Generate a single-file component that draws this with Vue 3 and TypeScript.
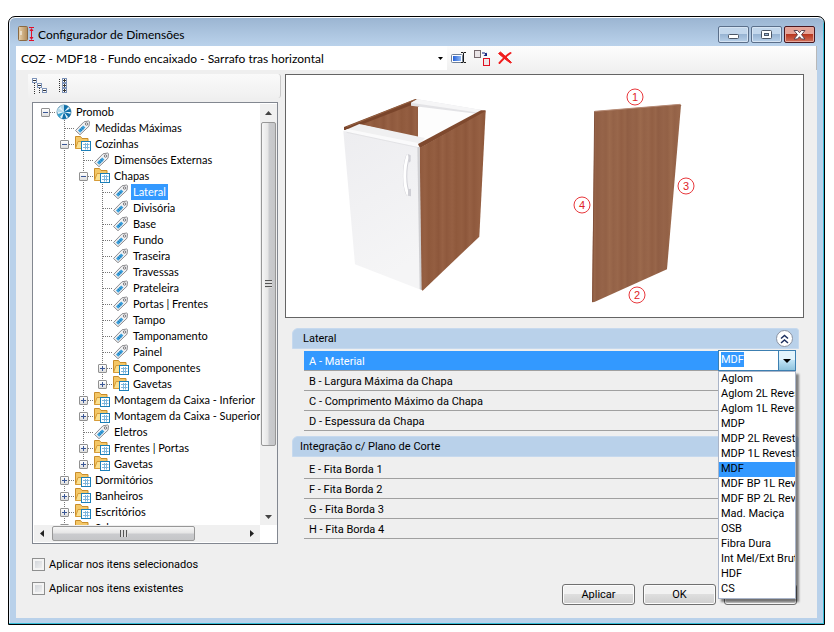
<script setup lang="ts">
import { computed, onMounted, ref } from 'vue'

type Kind = 'root' | 'tag' | 'folder'

interface TreeItem {
  id: number
  label: string
  depth: number
  kind: Kind
}

const source: [string, number, Kind][] = [
  ['Promob', 0, 'root'],
  ['Medidas Máximas', 1, 'tag'],
  ['Cozinhas', 1, 'folder'],
  ['Dimensões Externas', 2, 'tag'],
  ['Chapas', 2, 'folder'],
  ['Lateral', 3, 'tag'],
  ['Divisória', 3, 'tag'],
  ['Base', 3, 'tag'],
  ['Fundo', 3, 'tag'],
  ['Traseira', 3, 'tag'],
  ['Travessas', 3, 'tag'],
  ['Prateleira', 3, 'tag'],
  ['Portas | Frentes', 3, 'tag'],
  ['Tampo', 3, 'tag'],
  ['Tamponamento', 3, 'tag'],
  ['Painel', 3, 'tag'],
  ['Componentes', 3, 'folder'],
  ['Gavetas', 3, 'folder'],
  ['Montagem da Caixa - Inferior', 2, 'folder'],
  ['Montagem da Caixa - Superior', 2, 'folder'],
  ['Eletros', 2, 'tag'],
  ['Frentes | Portas', 2, 'folder'],
  ['Gavetas', 2, 'folder'],
  ['Dormitórios', 1, 'folder'],
  ['Banheiros', 1, 'folder'],
  ['Escritórios', 1, 'folder'],
  ['Salas', 1, 'folder'],
]

const items: TreeItem[] = source.map(([label, depth, kind], id) => ({ id, label, depth, kind }))
const selectedId = ref(5)
const collapsed = ref<Set<number>>(new Set())

const hasChildren = (id: number): boolean => (items[id + 1]?.depth ?? 0) > items[id].depth

function toggle(id: number): void {
  if (!hasChildren(id)) return
  const next = new Set(collapsed.value)
  if (!next.delete(id)) next.add(id)
  collapsed.value = next
}

const visible = computed<TreeItem[]>(() => {
  const out: TreeItem[] = []
  let hiddenBelow = Infinity
  for (const item of items) {
    if (item.depth > hiddenBelow) continue
    hiddenBelow = collapsed.value.has(item.id) ? item.depth : Infinity
    out.push(item)
  }
  return out
})

// True when a later sibling at this level exists, so its guide line keeps running down.
function continues(index: number, depth: number): boolean {
  if (depth === 0) return false
  for (const item of visible.value.slice(index + 1)) {
    if (item.depth < depth) return false
    if (item.depth === depth) return true
  }
  return depth === 1
}

function guideClass(index: number, depth: number, own: number): string {
  const goesOn = continues(index, depth)
  if (depth < own) return goesOn ? 'line' : ''
  if (depth === 0) return 'branch'
  return goesOn ? 'branch line' : 'branch last'
}

const isOpen = (id: number): boolean => hasChildren(id) && !collapsed.value.has(id)

const groups = [
  {
    title: 'Lateral',
    rows: ['A - Material', 'B - Largura Máxima da Chapa', 'C - Comprimento Máximo da Chapa', 'D - Espessura da Chapa'],
  },
  {
    title: 'Integração c/ Plano de Corte',
    rows: ['E - Fita Borda 1', 'F - Fita Borda 2', 'G - Fita Borda 3', 'H - Fita Borda 4'],
  },
]

const materials = [
  'Aglom', 'Aglom 2L Revest', 'Aglom 1L Revest', 'MDP', 'MDP 2L Revest', 'MDP 1L Revest', 'MDF',
  'MDF BP 1L Revest', 'MDF BP 2L Revest', 'Mad. Maciça', 'OSB', 'Fibra Dura', 'Int Mel/Ext Bruto', 'HDF', 'CS',
]
const material = ref('MDF')
const menuOpen = ref(true)
const materialInput = ref<HTMLInputElement[]>([])

onMounted(() => {
  const input = materialInput.value[0]
  input?.focus()
  input?.select()
})

const preset = ref('COZ - MDF18 - Fundo encaixado - Sarrafo tras horizontal')
const applySelected = ref(false)
const applyExisting = ref(false)
</script>

<template>
  <div class="desktop">
    <main class="window">
      <header class="titlebar">
        <svg class="app-icon" width="17" height="16" viewBox="0 0 17 16">
          <defs>
            <linearGradient id="door" x1="0" x2="1"><stop offset="0" stop-color="#e9d2ad" /><stop offset="1" stop-color="#b08a58" /></linearGradient>
          </defs>
          <rect x=".5" y=".5" width="9" height="14" rx="1" fill="url(#door)" stroke="#8a6a42" />
          <path d="M3 5v4" stroke="#fff" />
          <path d="M11 1.500h5M11 14.500h5M13.500 3v10" stroke="#e0102a" />
          <path d="M11.500 5l2-3 2 3zM11.500 11l2 3 2-3z" fill="#e0102a" />
        </svg>
        <h1>Configurador de Dimensões</h1>
        <div class="caption-buttons">
          <button type="button" aria-label="Minimizar">
            <svg width="13" height="10" viewBox="0 0 13 10"><rect x="1.500" y="4.500" width="10" height="4" rx="1" fill="#fff" stroke="#4b5666" /></svg>
          </button>
          <button type="button" aria-label="Maximizar">
            <svg width="13" height="10" viewBox="0 0 13 10"><rect x="1.500" y=".5" width="10" height="8" rx="1" fill="#fff" stroke="#4b5666" /><rect x="4.500" y="3.500" width="4" height="2" fill="#9bb7d5" stroke="#4b5666" /></svg>
          </button>
          <button type="button" class="close" aria-label="Fechar">
            <svg width="13" height="10" viewBox="0 0 13 10"><path d="M1 .5h3.500l2 2.200 2-2.200H12L8.500 4.700 12 9H8.500l-2-2.300L4.500 9H1l3.500-4.300z" fill="#fff" stroke="#5b4450" /></svg>
          </button>
        </div>
      </header>

      <div class="client">
        <div class="toolbar">
          <div class="preset">
            <select v-model="preset" aria-label="Configuração">
              <option>{{ preset }}</option>
            </select>
            <svg width="5" height="3" viewBox="0 0 5 3"><path d="M0 0h5L2.500 3z" fill="#000" /></svg>
          </div>
          <button type="button" class="tool" aria-label="Renomear">
            <svg width="16" height="16" viewBox="0 0 16 16">
              <defs>
                <linearGradient id="field" x1="0" x2="1"><stop offset="0" stop-color="#2460d8" /><stop offset="1" stop-color="#8fb8f4" /></linearGradient>
              </defs>
              <rect x=".5" y="4.500" width="11" height="8" rx="1" fill="#fff" stroke="#6f7f96" />
              <rect x="2" y="6" width="8" height="5" fill="url(#field)" />
              <path d="M10 2.500h2l.5.500.5-.5h2M10 12.500h2l.5-.5.5.5h2M12.500 3v9" stroke="#1b1b1b" fill="none" />
            </svg>
          </button>
          <button type="button" class="tool" aria-label="Duplicar">
            <svg width="17" height="17" viewBox="0 0 17 17">
              <rect x=".5" y=".5" width="6" height="7" fill="#e9e4e6" stroke="#75686c" />
              <path d="M8 3h3l1.500 1.500" stroke="#10207c" fill="none" /><path d="M13 2.500V6H9.500z" fill="#10207c" />
              <rect x="9.500" y="8.500" width="6" height="7" fill="#efe7e9" stroke="#e01020" />
            </svg>
          </button>
          <button type="button" class="tool" aria-label="Excluir">
            <svg width="16" height="16" viewBox="0 0 16 16">
              <path d="M1.500 3.500L3.500 2C7 5 10 8 14.500 12.500L13.500 13C9 10 5 6.500 1.500 3.500z" fill="#f01c1c" stroke="#f01c1c" />
              <path d="M13.500 3C9 5.500 6 9 2.500 13" stroke="#f01c1c" stroke-width="2" stroke-linecap="round" fill="none" />
            </svg>
          </button>
        </div>

        <div class="body">
          <section class="left">
            <div class="tree-tools">
              <button type="button" aria-label="Recolher tudo">
                <svg width="16" height="16" viewBox="0 0 16 16">
                  <path d="M2.500 5v11M7.500 10v6" stroke="#333" stroke-dasharray="1 1" />
                  <g fill="#fff" stroke="#7d93b8"><rect x=".5" y=".5" width="4" height="4" /><rect x="5.500" y="5.500" width="4" height="4" /><rect x="10.500" y="10.500" width="4" height="4" /></g>
                  <path d="M1 2.500h3M6 7.500h3M11 12.500h3" stroke="#333" />
                </svg>
              </button>
              <button type="button" aria-label="Expandir tudo">
                <svg width="10" height="16" viewBox="0 0 10 16">
                  <path d="M1.500 1v14" stroke="#333" stroke-dasharray="1 1" />
                  <g fill="#fff" stroke="#7d93b8"><rect x="4.500" y=".5" width="4" height="4" /><rect x="4.500" y="5.500" width="4" height="4" /><rect x="4.500" y="10.500" width="4" height="4" /></g>
                  <path d="M5 2.500h3M5 7.500h3M5 12.500h3M6.500 1v3M6.500 6v3M6.500 11v3" stroke="#333" />
                </svg>
              </button>
            </div>

            <div class="tree-box">
              <ul class="tree" role="tree" aria-label="Itens">
                <li
                  v-for="(item, index) in visible"
                  :key="item.id"
                  role="treeitem"
                  :aria-level="item.depth + 1"
                  :aria-selected="item.id === selectedId"
                >
                  <span v-for="d in item.depth + 1" :key="d" class="guide" :class="guideClass(index, d - 1, item.depth)">
                    <button
                      v-if="d - 1 === item.depth && item.kind !== 'tag'"
                      type="button"
                      class="expander"
                      :class="{ open: isOpen(item.id) }"
                      :aria-label="'Alternar ' + item.label"
                      @click="toggle(item.id)"
                    ></button>
                  </span>
                  <svg v-if="item.kind === 'root'" class="node-icon" width="18" height="16" viewBox="0 0 18 16">
                    <circle cx="9" cy="8" r="7" fill="#e3f3fb" stroke="#5d93b0" />
                    <path d="M9 8L9 1A7 7 0 0 1 13.500 2.600zM9 8l6-3.500A7 7 0 0 1 16 8zM9 8l6.800 2A7 7 0 0 1 13.500 13.400zM9 8l2.500 6.500A7 7 0 0 1 7 14.700z" fill="#0f6fa8" />
                    <path d="M9 8l-4.500 5.400A7 7 0 0 1 2.300 10.200z" fill="#3aa3cf" />
                    <path d="M9 8L2 8A7 7 0 0 1 3.200 4zM9 8L5 2.300A7 7 0 0 1 9 1z" fill="#b4d9ea" />
                  </svg>
                  <svg v-else-if="item.kind === 'tag'" class="node-icon" width="18" height="16" viewBox="0 0 18 16">
                    <path d="M1.500 10.500L10 1.800l4.800-.8.700.7-.5 4.500-9 8.500z" fill="#f1f1f2" stroke="#8c8c90" />
                    <circle cx="12.500" cy="4" r="1.200" fill="#fff" stroke="#77777c" />
                    <path d="M4 10.600l5.200-5.200 2.200 2.200-5.200 5.200z" fill="#3a9fdb" />
                    <path d="M5.800 8.800l2.200 2.200M7.400 7.200l2.200 2.200" stroke="#1b6ba6" stroke-width=".7" />
                  </svg>
                  <svg v-else class="node-icon" width="18" height="16" viewBox="0 0 18 16">
                    <path d="M1.500 12.500v-12h5l1.500 2h6v3" fill="#f4c766" stroke="#c98d2a" />
                    <path d="M1.500 12.500l2.500-7h11l-2 7z" fill="#fbe08f" stroke="#d79c38" />
                    <rect x="7.500" y="5.500" width="9" height="9" fill="#fff" stroke="#1c7fb8" />
                    <path d="M9 8.500h6.500M9 11.500h6.500M11.500 7v6.500M13.500 7v6.500" stroke="#7eb6dc" />
                  </svg>
                  <span class="node-label" :class="{ selected: item.id === selectedId }" @click="selectedId = item.id">{{ item.label }}</span>
                </li>
              </ul>
              <div class="vscroll">
                <svg width="7" height="4" viewBox="0 0 7 4"><path d="M0 4h7L3.500 0z" fill="#444" /></svg>
                <div class="thumb"><i></i></div>
                <svg width="7" height="4" viewBox="0 0 7 4"><path d="M0 0h7L3.500 4z" fill="#444" /></svg>
              </div>
              <div class="hscroll">
                <svg width="4" height="7" viewBox="0 0 4 7"><path d="M4 0v7L0 3.500z" fill="#222" /></svg>
                <div class="thumb"><i></i></div>
                <svg width="4" height="7" viewBox="0 0 4 7"><path d="M0 0v7l4-3.500z" fill="#222" /></svg>
              </div>
            </div>

            <div class="checks">
              <label><input v-model="applySelected" type="checkbox" /><span>Aplicar nos itens selecionados</span></label>
              <label><input v-model="applyExisting" type="checkbox" /><span>Aplicar nos itens existentes</span></label>
            </div>
          </section>

          <section class="right">
            <div class="preview">
              <svg viewBox="0 0 517 242" role="img" aria-label="Lateral">
                <defs>
                  <linearGradient id="wood" gradientUnits="userSpaceOnUse" x1="0" x2="92" spreadMethod="repeat">
                    <stop offset="0" stop-color="#925f44" /><stop offset=".12" stop-color="#98664a" />
                    <stop offset=".2" stop-color="#905e44" /><stop offset=".38" stop-color="#966449" />
                    <stop offset=".5" stop-color="#936146" /><stop offset=".62" stop-color="#9c6a4d" />
                    <stop offset=".74" stop-color="#946247" /><stop offset=".88" stop-color="#99674b" />
                    <stop offset="1" stop-color="#925f44" />
                  </linearGradient>
                  <linearGradient id="side" gradientUnits="userSpaceOnUse" x1="268" x2="350" spreadMethod="repeat">
                    <stop offset="0" stop-color="#8f593d" /><stop offset=".2" stop-color="#966043" />
                    <stop offset=".35" stop-color="#8f593c" /><stop offset=".55" stop-color="#945e41" />
                    <stop offset=".7" stop-color="#8d573b" /><stop offset=".85" stop-color="#976144" />
                    <stop offset="1" stop-color="#8f593d" />
                  </linearGradient>
                  <linearGradient id="front" x1="0" x2=".3" y1="0" y2="1">
                    <stop offset="0" stop-color="#ededf0" /><stop offset="1" stop-color="#f5f5f6" />
                  </linearGradient>
                </defs>
                <g transform="translate(44 5) scale(.3333)">
                  <path d="M88 133L258 62l10 18v94z" fill="url(#side)" />
                  <path d="M42 150v-9L256 57l12 4v5L52 150z" fill="#7a452b" />
                  <path d="M50 141L256 59" stroke="#a5704d" stroke-width="2" />
                  <path d="M264 80l180 22-180 84z" fill="#fdfdfd" />
                  <path d="M243 68l19-10 193 32-10 12-202-25z" fill="#e3e3e6" />
                  <path d="M243 68l19-10 193 32-8 8z" fill="#f6f6f7" />
                  <path d="M40 153l48-21 197 42-20 22z" fill="#f0f0f1" />
                  <path d="M40 153l13-6 214 43-3 12z" fill="#fafafb" />
                  <path d="M264 192L453 91l14 0-1 6-196 108z" fill="#7f492e" />
                  <path d="M269 204L467 93l-19 377-170 162-6-5z" fill="url(#side)" />
                  <path d="M40 153l223 48 9 428-197-76z" fill="url(#front)" />
                  <path d="M262 202l7-2 6 430-6-3z" fill="#cfcfd2" />
                  <path d="M50 157l212 45" stroke="#dcdce0" stroke-width="2" />
                  <path d="M235 226c-14 40-12 92 0 118" stroke="#d0d0d6" stroke-width="13" fill="none" />
                  <path d="M234 226c-14 40-12 92 0 118" stroke="#fff" stroke-width="9" fill="none" />
                  <path d="M234 222l8 4v18l-5 4zM234 328l9-2v23l-9-2z" fill="#cfcfd5" />
                </g>
                <g transform="translate(274 5) scale(.3333)">
                  <path d="M104 94L361 73l2 3-42 492-218 98-7 1z" fill="url(#wood)" />
                  <path d="M104 94L361 73" stroke="#b58a74" stroke-width="3" />
                  <path d="M104 94L98 666" stroke="#82503a" stroke-width="3" />
                </g>
                <g class="callouts">
                  <circle cx="349" cy="22" r="8" /><text x="349" y="26">1</text>
                  <circle cx="351" cy="220" r="8" /><text x="351" y="224">2</text>
                  <circle cx="400" cy="111" r="8" /><text x="400" y="115">3</text>
                  <circle cx="296" cy="130" r="8" /><text x="296" y="134">4</text>
                </g>
              </svg>
            </div>

            <div v-for="(group, g) in groups" :key="group.title" class="group">
              <div class="group-head" :class="{ indented: g === 0 }">
                <h2>{{ group.title }}</h2>
                <button type="button" :aria-label="'Recolher ' + group.title">
                  <svg width="9" height="10" viewBox="0 0 9 10"><path d="M1 4.500l3.500-3 3.500 3M1 9l3.500-3L8 9" fill="none" stroke="#1d2f5e" stroke-width="1.500" /></svg>
                </button>
              </div>
              <div class="rows">
                <div v-for="(row, r) in group.rows" :key="row" class="row" :class="{ active: g === 0 && r === 0 }">
                  <label v-if="g === 0 && r === 0" for="material">{{ row }}</label>
                  <span v-else>{{ row }}</span>
                  <div v-if="g === 0 && r === 0" class="combo">
                    <input id="material" ref="materialInput" v-model="material" type="text" autocomplete="off" />
                    <button type="button" aria-label="Abrir lista" @click="menuOpen = !menuOpen">
                      <svg width="8" height="4" viewBox="0 0 8 4"><path d="M0 0h8L4 4z" fill="#000" /></svg>
                    </button>
                    <select v-if="menuOpen" v-model="material" size="15" aria-label="Materiais">
                      <option v-for="name in materials" :key="name">{{ name }}</option>
                    </select>
                  </div>
                </div>
              </div>
            </div>

            <div class="actions">
              <button type="button">Aplicar</button>
              <button type="button">OK</button>
              <button type="button" aria-label="Cancelar"></button>
            </div>
          </section>
        </div>
      </div>
    </main>
  </div>
</template>

<style>
body {
  background: #fff;
}
</style>

<style scoped>
* {
  box-sizing: border-box;
}
.desktop {
  display: flex;
  min-height: 100vh;
  padding: 16px 9px 7px 8px;
  font: 11px/16px Roboto, "Liberation Sans", sans-serif;
  color: #000;
}
button,
input,
select {
  font: inherit;
  color: inherit;
}
button {
  display: flex;
  align-items: center;
  justify-content: center;
  padding: 0;
  border: 0;
  background: none;
}
svg {
  flex: none;
}
.window {
  flex: 1;
  display: flex;
  flex-direction: column;
  min-width: 0;
  padding: 0 6px 6px;
  border: 1px solid #000;
  border-radius: 7px 7px 0 0;
  background: linear-gradient(#9ab4d1, #b9d1ea 28px);
  box-shadow: inset 0 1px #fff, inset -1px -1px #35bdd8, inset 1px 0 #e4eefa;
}
.titlebar {
  display: flex;
  align-items: flex-start;
  height: 29px;
  padding: 9px 3px 0 2px;
  gap: 3px;
}
.app-icon {
  margin-left: 1px;
}
h1 {
  flex: 1;
  margin: 0;
  font: 12px/18px Lato, "Open Sans", sans-serif;
}
.caption-buttons {
  display: flex;
  gap: 2px;
}
.caption-buttons button {
  width: 31px;
  height: 17px;
  border: 1px solid #5b6f8a;
  border-radius: 2px;
  background: linear-gradient(#c3d7ec 45%, #98b4d3 50%, #b8d0e9);
  box-shadow: inset 0 0 0 1px #d6e4f3;
}
.caption-buttons .close {
  border-color: #4a1820;
  background: linear-gradient(#e5a397 45%, #b93720 50%, #d0705a);
  box-shadow: inset 0 0 0 1px #e6a99e;
}
.client {
  flex: 1;
  display: flex;
  flex-direction: column;
  margin: 0 1px;
  background: #efefef;
}
.toolbar {
  display: flex;
  align-items: center;
  gap: 7px;
  height: 24px;
  border-right: 1px solid #b8b8b8;
  background: linear-gradient(#fdfdfd, #f1f1f1);
}
.preset {
  display: flex;
  align-items: center;
  align-self: stretch;
  width: 431px;
  padding-right: 4px;
  background: #fff;
}
.preset select {
  flex: 1;
  min-width: 0;
  height: 24px;
  padding: 2px 5px 0;
  border: 0;
  appearance: none;
  background: none;
  font: 12px/16px Lato, "Open Sans", sans-serif;
}
.tool {
  width: 16px;
  height: 20px;
}
.tool:first-of-type {
  margin-left: -3px;
}
.body {
  flex: 1;
  display: grid;
  grid-template-columns: 253px 1fr;
  gap: 4px;
  padding: 4px 13px 13px 12px;
}
.left {
  display: flex;
  flex-direction: column;
}
.tree-tools {
  display: flex;
  gap: 10px;
  height: 24px;
  padding: 4px;
  border-right: 1px solid #c8c8c8;
  border-radius: 0 3px 3px 0;
  background: linear-gradient(#fafafa, #f0f0f0);
}
.tree-box {
  flex: 1;
  display: grid;
  grid-template-columns: 1fr 17px;
  grid-template-rows: 1fr 17px;
  min-height: 0;
  margin: 4px 3px 0 4px;
  padding: 1px 0 1px 1px;
  border: 1px solid #828790;
  background: #fff;
}
.tree {
  height: 421px;
  margin: 0;
  padding: 0 0 0 2px;
  overflow: hidden;
  list-style: none;
  font: 11px/16px Lato, Roboto, sans-serif;
}
.tree li {
  display: flex;
  height: 16px;
  white-space: nowrap;
}
.guide {
  position: relative;
  flex: none;
  width: 19px;
  height: 16px;
}
.guide.line::before,
.guide.last::before {
  content: "";
  position: absolute;
  left: 9px;
  top: 0;
  bottom: 0;
  width: 1px;
  background: repeating-linear-gradient(#777 0 1px, transparent 1px 2px);
}
.guide.last::before {
  bottom: 8px;
}
.guide.branch::after {
  content: "";
  position: absolute;
  left: 10px;
  right: 0;
  top: 8px;
  height: 1px;
  background: repeating-linear-gradient(90deg, #777 0 1px, transparent 1px 2px);
}
.expander {
  position: absolute;
  z-index: 1;
  left: 5px;
  top: 4px;
  width: 9px;
  height: 9px;
  border: 1px solid #919191;
  border-radius: 1px;
  background:
    linear-gradient(#3a5795, #3a5795) center / 5px 1px no-repeat,
    linear-gradient(#3a5795, #3a5795) center / 1px 5px no-repeat,
    linear-gradient(#fff, #dedede);
}
.expander.open {
  background:
    linear-gradient(#3a5795, #3a5795) center / 5px 1px no-repeat,
    linear-gradient(#fff, #dedede);
}
.node-icon {
  margin-right: 1px;
}
.node-label {
  padding: 0 2px;
}
.node-label.selected {
  background: #39f;
  color: #fff;
}
.vscroll,
.hscroll {
  display: flex;
  align-items: center;
  background: #f0f0f0;
}
.vscroll {
  flex-direction: column;
  padding: 7px 0 6px;
}
.vscroll .thumb {
  flex: none;
  width: 15px;
  height: 324px;
  margin: 7px 0 auto;
  background: linear-gradient(90deg, #f6f6f6, #e6e6e6 45%, #cacbce 55%, #c5c6c8);
}
.hscroll {
  grid-column: 1;
  padding: 0 6px;
}
.hscroll .thumb {
  width: 143px;
  height: 15px;
  margin: 0 auto 0 8px;
  background: linear-gradient(#f6f6f6, #e6e6e6 45%, #cacbce 55%, #c5c6c8);
}
.thumb {
  display: flex;
  align-items: center;
  justify-content: center;
  border: 1px solid #979797;
  border-radius: 2px;
}
.thumb i {
  width: 8px;
  height: 7px;
  background: repeating-linear-gradient(90deg, #555 0 1px, #ddd 1px 3px);
}
.vscroll .thumb i {
  width: 7px;
  height: 8px;
  background: repeating-linear-gradient(#555 0 1px, #ddd 1px 3px);
}
.checks {
  display: flex;
  flex-direction: column;
  gap: 8px;
  padding: 12px 4px 9px;
}
.checks label {
  display: flex;
  align-items: center;
  gap: 4px;
  height: 16px;
}
.checks span {
  padding-top: 2px;
}
.checks input {
  appearance: none;
  width: 13px;
  height: 13px;
  margin: 0;
  border: 1px solid #8e8f8f;
  background: linear-gradient(135deg, #cbcfd5, #f6f6f6);
  box-shadow: inset 0 0 0 2px #f4f4f4;
}
.checks input:checked {
  background: #3a5795;
}
.right {
  display: flex;
  flex-direction: column;
  min-width: 0;
}
.preview {
  height: 244px;
  margin-bottom: 10px;
  border: 1px solid #646464;
  background: #fff;
}
.preview svg {
  display: block;
  width: 100%;
  height: 100%;
}
.callouts circle {
  fill: none;
  stroke: #e8383c;
}
.callouts text {
  fill: #e02428;
  font: 11px "Liberation Sans", sans-serif;
  text-anchor: middle;
}
.group {
  margin: 0 5px 5px 7px;
}
.group-head {
  display: flex;
  align-items: center;
  justify-content: space-between;
  height: 21px;
  padding: 0 5px 0 7px;
  border: 1px solid #c6d9ee;
  border-radius: 6px 3px 0 0;
  background: #b9d1ea;
}
.group-head.indented {
  padding-left: 10px;
}
h2 {
  margin: 0;
  font-size: 11px;
  font-weight: 400;
  line-height: 16px;
}
.group-head button {
  width: 17px;
  height: 17px;
  border: 1px solid #8b93a3;
  border-radius: 50%;
  background: #fff;
}
.rows {
  margin: 2px 3px 0 12px;
}
.row {
  display: flex;
  align-items: center;
  height: 20px;
  padding-left: 5px;
  border-bottom: 1px solid #a0a0a0;
}
.row > label,
.row > span {
  padding-top: 2px;
}
.row.active {
  justify-content: space-between;
  background: #39f;
  color: #fff;
}
.combo {
  position: relative;
  display: flex;
  width: 78px;
  height: 21px;
  border: 1px solid #3c7fb1;
  background: #fff;
  color: #000;
}
.combo input {
  flex: 1;
  min-width: 0;
  height: 15px;
  margin: 1px 0;
  padding: 0 2px;
  border: 0;
  outline: 0;
}
.combo input::selection {
  background: #39f;
  color: #fff;
}
.combo button {
  width: 17px;
  border-left: 1px solid #3c7fb1;
  background: linear-gradient(#e3f4fc 45%, #bfe3f6 50%, #8fc3dd);
}
.combo select {
  position: absolute;
  z-index: 2;
  top: 20px;
  left: -1px;
  width: 78px;
  height: 228px;
  padding: 0;
  overflow: hidden;
  border: 1px solid #a9b4c8;
  border-radius: 0;
  outline: 0;
  background: #fff;
  box-shadow: 3px 3px 2px #0007;
}
.combo option {
  min-height: 15px;
  height: 15px;
  padding: 0 2px;
  line-height: 15px;
  color: #000;
}
.combo option:checked {
  background: #39f linear-gradient(#39f, #39f);
  color: #000;
}
.actions {
  display: flex;
  justify-content: flex-end;
  gap: 8px;
  margin-top: auto;
  padding-right: 7px;
}
.actions button {
  width: 73px;
  height: 21px;
  border: 1px solid #707070;
  border-radius: 3px;
  background: linear-gradient(#f2f2f2 45%, #dedede 50%, #cfcfcf);
  box-shadow: inset 0 0 0 1px #fcfcfc;
}
</style>
